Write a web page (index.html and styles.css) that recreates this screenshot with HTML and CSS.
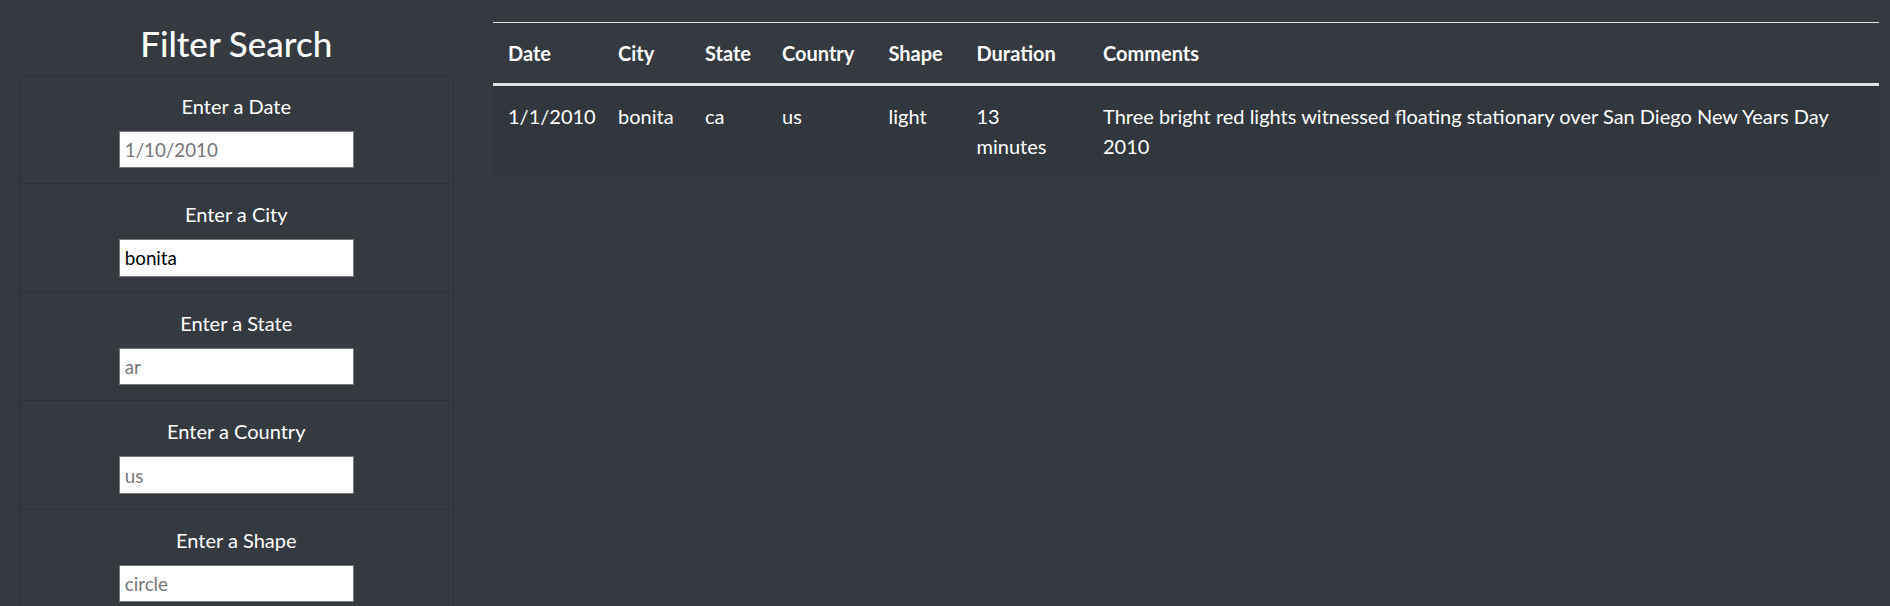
FILE: index.html
```html
<!DOCTYPE html>
<html lang="en">
<head>
<meta charset="utf-8">
<title>UFO Sightings</title>
<link rel="stylesheet" href="styles.css">
</head>
<body>
<div class="page">
  <aside class="sidebar">
    <h3 class="title">Filter Search</h3>
    <ul class="filters">
      <li class="filter">
        <label class="filter-label" for="datetime">Enter a Date</label>
        <input class="filter-input" id="datetime" type="text" placeholder="1/10/2010">
      </li>
      <li class="filter">
        <label class="filter-label" for="city">Enter a City</label>
        <input class="filter-input" id="city" type="text" value="bonita">
      </li>
      <li class="filter">
        <label class="filter-label" for="state">Enter a State</label>
        <input class="filter-input" id="state" type="text" placeholder="ar">
      </li>
      <li class="filter">
        <label class="filter-label" for="country">Enter a Country</label>
        <input class="filter-input" id="country" type="text" placeholder="us">
      </li>
      <li class="filter">
        <label class="filter-label" for="shape">Enter a Shape</label>
        <input class="filter-input" id="shape" type="text" placeholder="circle">
      </li>
    </ul>
  </aside>
  <main class="results">
    <table class="data-table">
      <colgroup>
        <col class="col-date">
        <col class="col-city">
        <col class="col-state">
        <col class="col-country">
        <col class="col-shape">
        <col class="col-duration">
        <col class="col-comments">
      </colgroup>
      <thead>
        <tr>
          <th>Date</th>
          <th>City</th>
          <th>State</th>
          <th>Country</th>
          <th>Shape</th>
          <th>Duration</th>
          <th>Comments</th>
        </tr>
      </thead>
      <tbody>
        <tr>
          <td>1/1/2010</td>
          <td>bonita</td>
          <td>ca</td>
          <td>us</td>
          <td>light</td>
          <td><span class="stack">13 minutes</span></td>
          <td>Three bright red lights witnessed floating stationary over San Diego New Years Day 2010</td>
        </tr>
      </tbody>
    </table>
  </main>
</div>
</body>
</html>
```
FILE: styles.css
```css
html {
  overflow: hidden;
}

body {
  margin: 0;
  background: #343a40;
  color: #fff;
  font-family: Lato, "Segoe UI", sans-serif;
  font-size: 20px;
  line-height: 30px;
}

.page {
  display: flex;
  align-items: flex-start;
  padding-top: 22px;
}

.sidebar {
  flex: none;
  width: 472.5px;
  padding: 0 18.75px;
  box-sizing: border-box;
}

.title {
  margin: 0 0 10.5px;
  font-size: 35px;
  line-height: 42px;
  font-weight: 500;
  text-align: center;
}

.filters {
  list-style: none;
  margin: 0;
  padding: 0;
  border: 1px solid rgba(0, 0, 0, 0.125);
  border-radius: 5px;
}

.filter {
  display: flex;
  flex-direction: column;
  align-items: center;
  padding: 15px 25px;
}

.filter + .filter {
  border-top: 1px solid rgba(0, 0, 0, 0.125);
}

.filter-label {
  margin-bottom: 10px;
}

.filter-input {
  width: 235px;
  height: 37.6px;
  box-sizing: border-box;
  margin: 0;
  padding: 0 5px;
  border: 1px solid #767676;
  border-radius: 0;
  background: #fff;
  color: #000;
  font-family: Lato, "Segoe UI", sans-serif;
  font-size: 18.75px;
  outline: none;
}

.filter-input::placeholder {
  color: #757575;
  opacity: 1;
}

.results {
  flex: 1;
  min-width: 0;
  padding: 0 11px 0 20.5px;
}

.data-table {
  width: 100%;
  table-layout: fixed;
  border-collapse: separate;
  border-spacing: 0;
}

.col-date { width: 110px; }
.col-city { width: 87px; }
.col-state { width: 77px; }
.col-country { width: 106.5px; }
.col-shape { width: 88px; }
.col-duration { width: 126.5px; }

.data-table th {
  padding: 15px;
  text-align: left;
  vertical-align: bottom;
  font-weight: 700;
  border-top: 1px solid #dee2e6;
  border-bottom: 3px solid #dee2e6;
}

.data-table td {
  padding: 15px;
  vertical-align: top;
}

.data-table tbody tr {
  background: rgba(0, 0, 0, 0.05);
}

.stack {
  display: inline-block;
  width: min-content;
}
```
